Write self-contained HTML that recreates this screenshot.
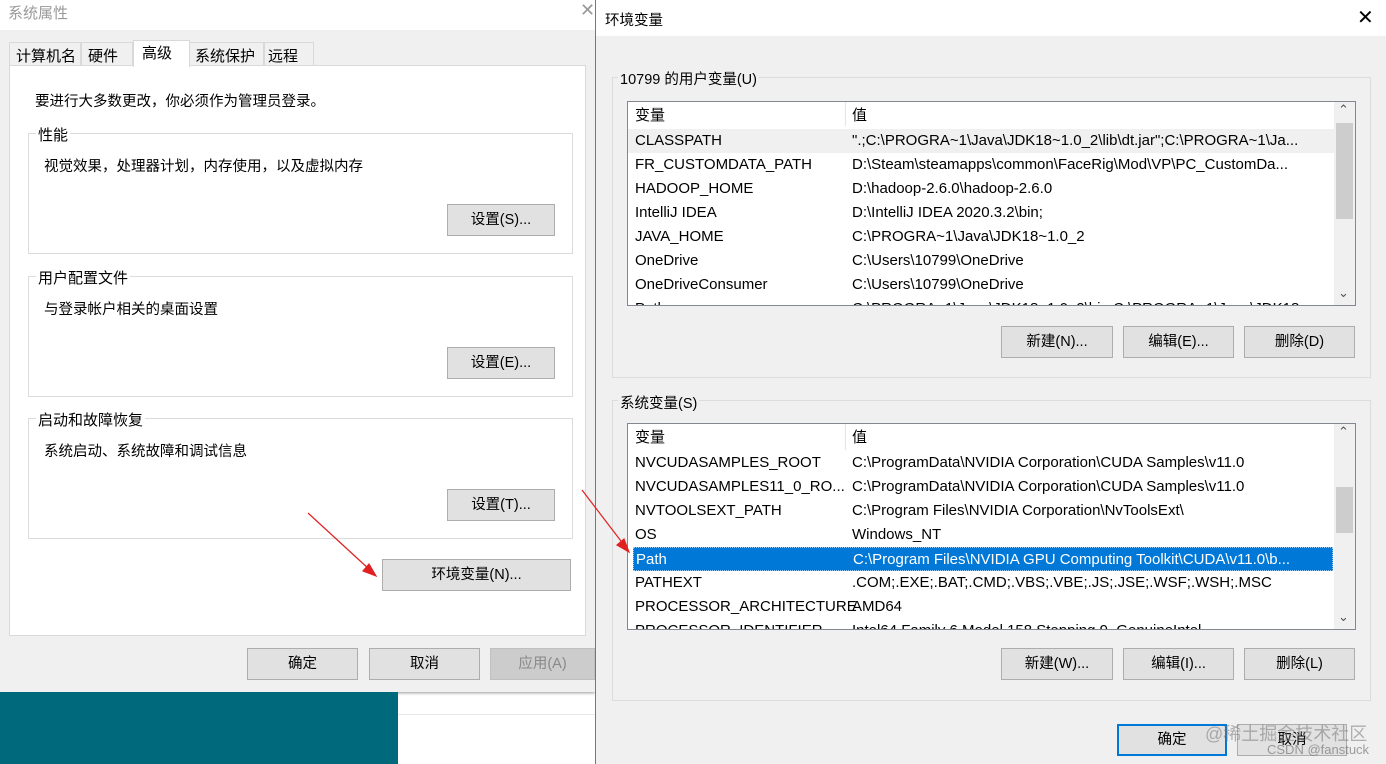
<!DOCTYPE html><html><head><meta charset="utf-8"><style>
*{margin:0;padding:0;box-sizing:border-box}
body{width:1386px;height:764px;position:relative;overflow:hidden;background:#fff;font-family:"Liberation Sans","Noto Sans CJK SC",sans-serif;font-size:15px;color:#000}
.a{position:absolute}
.btn{position:absolute;background:#e1e1e1;border:1px solid #adadad;text-align:center;font-size:14.5px;line-height:30px;height:32px}
.grp{position:absolute;border:1px solid #dcdcdc}
.lbl{position:absolute;background:#f0f0f0;padding:0 2px;font-size:14.5px}
.row{position:absolute;left:0;width:706px;height:24px;line-height:24px;white-space:nowrap;overflow:hidden;font-size:15px}
.c1{position:absolute;left:7px}.c2{position:absolute;left:224px}
</style></head><body>
<div class="a" style="left:0;top:0;width:595px;height:692px;background:#f0f0f0;box-shadow:0 1px 3px rgba(0,0,0,.4)"></div>
<div class="a" style="left:0;top:0;width:595px;height:30px;background:#fff"></div>
<div class="a" style="left:8px;top:2px;color:#999;font-size:15px">系统属性</div>
<div class="a" style="left:580px;top:0;color:#999;font-size:18px">✕</div>
<div class="a" style="left:0;top:692px;width:398px;height:72px;background:#006a7c"></div>
<div class="a" style="left:398px;top:714px;width:197px;height:1px;background:#e8e8e8"></div>
<div class="a" style="left:9px;top:42px;width:72px;height:24px;border:1px solid #d9d9d9;background:#f0f0f0"></div>
<div class="a" style="left:16px;top:45px;font-size:15px">计算机名</div>
<div class="a" style="left:81px;top:42px;width:52px;height:24px;border:1px solid #d9d9d9;background:#f0f0f0"></div>
<div class="a" style="left:88px;top:45px">硬件</div>
<div class="a" style="left:189px;top:42px;width:75px;height:24px;border:1px solid #d9d9d9;background:#f0f0f0"></div>
<div class="a" style="left:195px;top:45px">系统保护</div>
<div class="a" style="left:264px;top:42px;width:50px;height:24px;border:1px solid #d9d9d9;background:#f0f0f0"></div>
<div class="a" style="left:268px;top:45px">远程</div>
<div class="a" style="left:9px;top:65px;width:577px;height:571px;background:#fff;border:1px solid #d9d9d9"></div>
<div class="a" style="left:133px;top:40px;width:57px;height:27px;background:#fff;border:1px solid #d9d9d9;border-bottom:none"></div>
<div class="a" style="left:142px;top:42px">高级</div>
<div class="a" style="left:35px;top:90px;font-size:14.5px">要进行大多数更改，你必须作为管理员登录。</div>
<div class="grp" style="left:28px;top:133px;width:545px;height:121px"></div>
<div class="a" style="left:36px;top:124px;background:#fff;padding:0 2px">性能</div>
<div class="a" style="left:44px;top:155px;font-size:14.5px">视觉效果，处理器计划，内存使用，以及虚拟内存</div>
<div class="btn" style="left:447px;top:204px;width:108px">设置(S)...</div>
<div class="grp" style="left:28px;top:276px;width:545px;height:121px"></div>
<div class="a" style="left:36px;top:267px;background:#fff;padding:0 2px">用户配置文件</div>
<div class="a" style="left:44px;top:298px;font-size:14.5px">与登录帐户相关的桌面设置</div>
<div class="btn" style="left:447px;top:347px;width:108px">设置(E)...</div>
<div class="grp" style="left:28px;top:418px;width:545px;height:121px"></div>
<div class="a" style="left:36px;top:409px;background:#fff;padding:0 2px">启动和故障恢复</div>
<div class="a" style="left:44px;top:440px;font-size:14.5px">系统启动、系统故障和调试信息</div>
<div class="btn" style="left:447px;top:489px;width:108px">设置(T)...</div>
<div class="btn" style="left:382px;top:559px;width:189px">环境变量(N)...</div>
<div class="btn" style="left:247px;top:648px;width:111px">确定</div>
<div class="btn" style="left:369px;top:648px;width:111px">取消</div>
<div class="btn" style="left:490px;top:648px;width:105px;background:#ccc;border-color:#bfbfbf;color:#888">应用(A)</div>
<svg class="a" style="left:0;top:0" width="700" height="620"><g stroke="#e02020" stroke-width="1.2" fill="#e02020">
<line x1="308" y1="513" x2="370" y2="570"/><polygon points="376,576 363,571 369,564"/></g></svg>
<div class="a" style="left:595px;top:0;width:791px;height:764px;background:#f0f0f0;border-left:1px solid #777"></div>
<div class="a" style="left:596px;top:0;width:790px;height:36px;background:#fff"></div>
<div class="a" style="left:605px;top:9px;font-size:14.5px">环境变量</div>
<div class="a" style="left:1357px;top:5px;font-size:20px">✕</div>
<div class="grp" style="left:612px;top:77px;width:759px;height:301px"></div>
<div class="lbl" style="left:618px;top:68px">10799 的用户变量(U)</div>
<div class="a" style="left:627px;top:101px;width:729px;height:205px;background:#fff;border:1px solid #828790;overflow:hidden">
<div class="a" style="left:217px;top:0;width:1px;height:24px;background:#e5e5e5"></div>
<div class="row" style="top:2px"><span class="c1">变量</span><span class="c2">值</span></div>
<div class="row" style="top:27px;background:#f0f0f0"><span class="c1">CLASSPATH</span><span class="c2">".;C:\PROGRA~1\Java\JDK18~1.0_2\lib\dt.jar";C:\PROGRA~1\Ja...</span></div>
<div class="row" style="top:51px"><span class="c1">FR_CUSTOMDATA_PATH</span><span class="c2">D:\Steam\steamapps\common\FaceRig\Mod\VP\PC_CustomDa...</span></div>
<div class="row" style="top:75px"><span class="c1">HADOOP_HOME</span><span class="c2">D:\hadoop-2.6.0\hadoop-2.6.0</span></div>
<div class="row" style="top:99px"><span class="c1">IntelliJ IDEA</span><span class="c2">D:\IntelliJ IDEA 2020.3.2\bin;</span></div>
<div class="row" style="top:123px"><span class="c1">JAVA_HOME</span><span class="c2">C:\PROGRA~1\Java\JDK18~1.0_2</span></div>
<div class="row" style="top:147px"><span class="c1">OneDrive</span><span class="c2">C:\Users\10799\OneDrive</span></div>
<div class="row" style="top:171px"><span class="c1">OneDriveConsumer</span><span class="c2">C:\Users\10799\OneDrive</span></div>
<div class="row" style="top:195px"><span class="c1">Path</span><span class="c2">C:\PROGRA~1\Java\JDK18~1.0_2\bin;C:\PROGRA~1\Java\JDK18...</span></div>
<div class="a" style="left:706px;top:0;width:21px;height:203px;background:#f0f0f0"></div>
<div class="a" style="left:708px;top:21px;width:17px;height:96px;background:#cdcdcd"></div>
<div class="a" style="left:710px;top:0;font-size:13px;color:#555">⌃</div>
<div class="a" style="left:710px;top:183px;font-size:13px;color:#555">⌄</div>
</div>
<div class="btn" style="left:1001px;top:326px;width:112px">新建(N)...</div>
<div class="btn" style="left:1123px;top:326px;width:111px">编辑(E)...</div>
<div class="btn" style="left:1244px;top:326px;width:111px">删除(D)</div>
<div class="grp" style="left:612px;top:400px;width:759px;height:301px"></div>
<div class="lbl" style="left:618px;top:392px">系统变量(S)</div>
<div class="a" style="left:627px;top:423px;width:729px;height:207px;background:#fff;border:1px solid #828790;overflow:hidden">
<div class="a" style="left:217px;top:0;width:1px;height:26px;background:#e5e5e5"></div>
<div class="row" style="top:2px"><span class="c1">变量</span><span class="c2">值</span></div>
<div class="row" style="top:27px"><span class="c1">NVCUDASAMPLES_ROOT</span><span class="c2">C:\ProgramData\NVIDIA Corporation\CUDA Samples\v11.0</span></div>
<div class="row" style="top:51px"><span class="c1">NVCUDASAMPLES11_0_RO...</span><span class="c2">C:\ProgramData\NVIDIA Corporation\CUDA Samples\v11.0</span></div>
<div class="row" style="top:75px"><span class="c1">NVTOOLSEXT_PATH</span><span class="c2">C:\Program Files\NVIDIA Corporation\NvToolsExt\</span></div>
<div class="row" style="top:99px"><span class="c1">OS</span><span class="c2">Windows_NT</span></div>
<div class="row" style="top:123px;left:5px;width:700px;background:#0078d7;color:#fff;border:1px dotted #99c9ef"><span class="c1" style="left:2px">Path</span><span class="c2" style="left:219px">C:\Program Files\NVIDIA GPU Computing Toolkit\CUDA\v11.0\b...</span></div>
<div class="row" style="top:147px"><span class="c1">PATHEXT</span><span class="c2">.COM;.EXE;.BAT;.CMD;.VBS;.VBE;.JS;.JSE;.WSF;.WSH;.MSC</span></div>
<div class="row" style="top:171px"><span class="c1">PROCESSOR_ARCHITECTURE</span><span class="c2">AMD64</span></div>
<div class="row" style="top:195px"><span class="c1">PROCESSOR_IDENTIFIER</span><span class="c2">Intel64 Family 6 Model 158 Stepping 9, GenuineIntel</span></div>
<div class="a" style="left:706px;top:0;width:21px;height:205px;background:#f0f0f0"></div>
<div class="a" style="left:708px;top:63px;width:17px;height:46px;background:#cdcdcd"></div>
<div class="a" style="left:710px;top:0;font-size:13px;color:#555">⌃</div>
<div class="a" style="left:710px;top:185px;font-size:13px;color:#555">⌄</div>
</div>
<div class="btn" style="left:1001px;top:648px;width:112px">新建(W)...</div>
<div class="btn" style="left:1123px;top:648px;width:111px">编辑(I)...</div>
<div class="btn" style="left:1244px;top:648px;width:111px">删除(L)</div>
<div class="btn" style="left:1117px;top:724px;width:110px;height:32px;border:2px solid #0078d7;line-height:28px">确定</div>
<div class="btn" style="left:1237px;top:724px;width:110px">取消</div>
<div class="a" style="left:1205px;top:720px;font-size:18px;color:rgba(120,120,120,.55)">@稀土掘金技术社区</div>
<div class="a" style="left:1267px;top:742px;font-size:13px;color:rgba(120,120,120,.7)">CSDN @fanstuck</div>
<svg class="a" style="left:570px;top:480px" width="70" height="80"><g stroke="#e02020" stroke-width="1.2" fill="#e02020">
<line x1="12" y1="10" x2="54" y2="65"/><polygon points="59,72 47,65 54,59"/></g></svg>
</body></html>
